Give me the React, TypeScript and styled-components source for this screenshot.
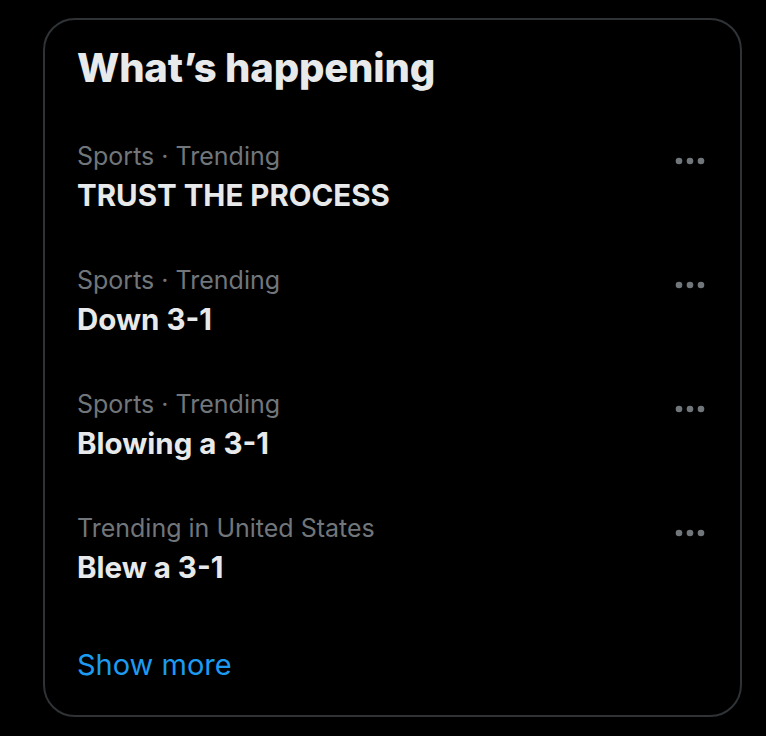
import styled, { createGlobalStyle } from "styled-components";

const GlobalStyle = createGlobalStyle`
  html, body {
    margin: 0;
    padding: 0;
    background: #000;
  }
  body {
    font-family: Inter, "Liberation Sans", Arial, sans-serif;
    -webkit-font-smoothing: antialiased;
  }
`;

const Page = styled.div`
  width: 766px;
  height: 736px;
  padding: 18px 24px 0 43px;
  box-sizing: border-box;
  background: #000;
`;

const Card = styled.section`
  border: 2px solid #2f3336;
  border-radius: 32px;
  height: 699px;
  box-sizing: border-box;
  display: flex;
  flex-direction: column;
`;

const Title = styled.h2`
  margin: 0;
  padding: 24px 32px 22px 32px;
  font-size: 40px;
  line-height: 48px;
  font-weight: 800;
  letter-spacing: -0.2px;
  color: #e7e9ea;
`;

const Trend = styled.div`
  display: flex;
  align-items: flex-start;
  justify-content: space-between;
  padding: 23px 30px 23px 32px;
`;

const TrendText = styled.div`
  display: flex;
  flex-direction: column;
`;

const Label = styled.span`
  font-size: 25px;
  line-height: 38px;
  color: #71767b;
  font-weight: 400;
`;

const Name = styled.span`
  font-size: 29.5px;
  line-height: 40px;
  font-weight: 700;
  color: #e7e9ea;
`;

const More = styled.button`
  width: 40px;
  height: 40px;
  margin-top: 4px;
  padding: 0;
  border: 0;
  background: transparent;
  display: flex;
  align-items: center;
  justify-content: center;
  color: #71767b;
`;

const ShowMore = styled.a`
  padding: 35px 32px 30px;
  font-size: 29px;
  line-height: 40px;
  color: #1d9bf0;
  text-decoration: none;
`;

const Dots = () => (
  <svg width="32" height="8" viewBox="0 0 32 8" fill="currentColor">
    <circle cx="5" cy="4" r="3.3" />
    <circle cx="16" cy="4" r="3.3" />
    <circle cx="27" cy="4" r="3.3" />
  </svg>
);

const trends = [
  { label: "Sports · Trending", name: "TRUST THE PROCESS" },
  { label: "Sports · Trending", name: "Down 3-1" },
  { label: "Sports · Trending", name: "Blowing a 3-1" },
  { label: "Trending in United States", name: "Blew a 3-1" },
];

export default function App() {
  return (
    <>
      <GlobalStyle />
      <Page>
        <Card>
          <Title>What’s happening</Title>
          {trends.map((t, i) => (
            <Trend key={i}>
              <TrendText>
                <Label>{t.label}</Label>
                <Name>{t.name}</Name>
              </TrendText>
              <More aria-label="More">
                <Dots />
              </More>
            </Trend>
          ))}
          <ShowMore href="#">Show more</ShowMore>
        </Card>
      </Page>
    </>
  );
}
